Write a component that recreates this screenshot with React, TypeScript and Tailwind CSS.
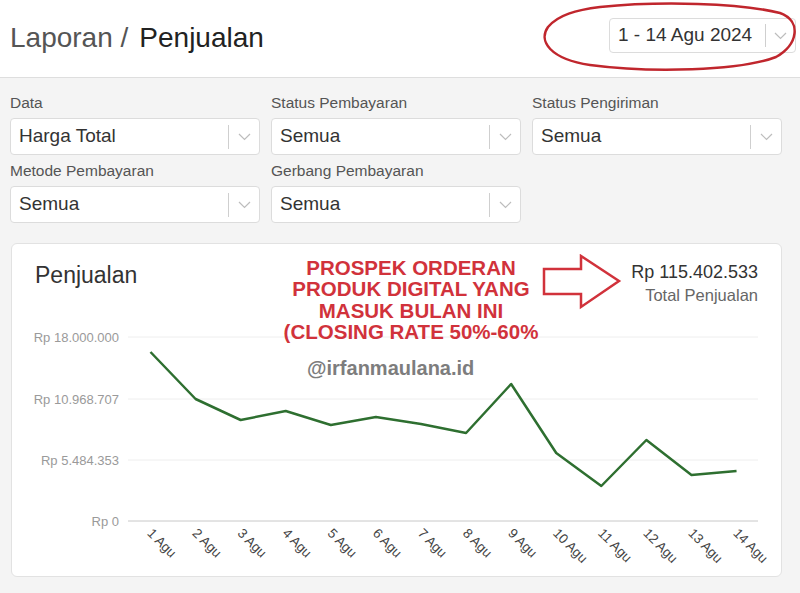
import React from "react";

const font = { fontFamily: '"Liberation Sans", Arial, sans-serif' };

function Chevron() {
  return (
    <svg width="13" height="8" viewBox="0 0 13 8">
      <path d="M1 1 L6.5 6.5 L12 1" fill="none" stroke="#bdbdbd" strokeWidth="1.2" />
    </svg>
  );
}

function SelectBox({ value }: { value: string }) {
  return (
    <div className="flex items-center h-[37px] bg-white border border-[#dcdcdc] rounded-[4px]">
      <div className="flex-1 pl-[8px] text-[19px] text-[#333]">{value}</div>
      <div className="w-px h-[24px] bg-[#cfcfcf]" />
      <div className="w-[30px] flex justify-center">
        <Chevron />
      </div>
    </div>
  );
}

const filters = [
  { label: "Data", value: "Harga Total" },
  { label: "Status Pembayaran", value: "Semua" },
  { label: "Status Pengiriman", value: "Semua" },
  { label: "Metode Pembayaran", value: "Semua" },
  { label: "Gerbang Pembayaran", value: "Semua" },
];

// chart points, svg coords (card-relative, chart top = page y 320)
const points = [31, 78, 99, 90, 104, 96, 103, 112, 63, 132, 165, 119, 154, 150];
const yTicks = [
  { label: "Rp 18.000.000", y: 16 },
  { label: "Rp 10.968.707", y: 78 },
  { label: "Rp 5.484.353", y: 139 },
  { label: "Rp 0", y: 200 },
];

function Chart() {
  const xs = points.map((_, i) => 139.5 + i * 45.08);
  const d = points.map((y, i) => `${i === 0 ? "M" : "L"}${xs[i]} ${y}`).join(" ");
  return (
    <svg width="771" height="256" viewBox="0 0 771 256" className="block">
      {yTicks.map((t) => (
        <g key={t.label}>
          <line
            x1="117"
            x2="747"
            y1={t.y}
            y2={t.y}
            stroke={t.y === 200 ? "#c8c8c8" : "#eeeeee"}
            strokeWidth="1"
          />
          <text
            x="108"
            y={t.y + 4.5}
            textAnchor="end"
            fontSize="13"
            fill="#9a9a9a"
            fontFamily='"Liberation Sans", Arial, sans-serif'
          >
            {t.label}
          </text>
        </g>
      ))}
      <path d={d} fill="none" stroke="#2e6f30" strokeWidth="2.5" strokeLinejoin="round" />
      {xs.map((x, i) => (
        <text
          key={i}
          x={x - 4}
          y={213}
          fontSize="13.5"
          fill="#444"
          fontFamily='"Liberation Sans", Arial, sans-serif'
          transform={`rotate(45 ${x - 4} 213)`}
        >
          {`${i + 1} Agu`}
        </text>
      ))}
    </svg>
  );
}

export default function App() {
  return (
    <div className="w-[800px] h-[593px] bg-[#f4f4f4] overflow-hidden" style={font}>
      <div className="relative h-[78px] bg-white border-b border-[#dedede] flex justify-between items-start pl-[10px] pr-[4px]">
        <h1 className="mt-[21px] text-[28px] leading-[34px] font-normal">
          <span className="text-[#555]">Laporan /</span>
          <span className="ml-[11px] text-[#222]">Penjualan</span>
        </h1>
        <div className="mt-[18px] w-[187px] flex items-center h-[35px] bg-white border border-[#dcdcdc] rounded-[4px]">
          <div className="flex-1 pl-[8px] text-[19px] text-[#333]">1 - 14 Agu 2024</div>
          <div className="w-px h-[23px] bg-[#cfcfcf]" />
          <div className="w-[29px] flex justify-center">
            <Chevron />
          </div>
        </div>
        <svg className="absolute left-[540px] top-[1px]" width="260" height="74" viewBox="0 0 260 74">
          <path
            d="M60 6 C120 0 200 2 240 12 C262 20 258 44 236 56 C200 70 110 72 50 64 C10 58 -2 40 8 26 C18 14 36 9 60 6 Z"
            fill="none"
            stroke="#c0262d"
            strokeWidth="2.5"
          />
        </svg>
      </div>

      <div className="px-[10px] pt-[16px] grid grid-cols-[250px_250px_250px] gap-x-[11px] gap-y-[7px]">
        {filters.map((f) => (
          <div key={f.label}>
            <div className="h-[18px] leading-[18px] text-[15.5px] text-[#555]">{f.label}</div>
            <div className="mt-[6px]">
              <SelectBox value={f.value} />
            </div>
          </div>
        ))}
      </div>

      <div className="relative ml-[11px] mt-[20px] w-[771px] h-[334px] bg-white border border-[#e2e2e2] rounded-[6px]">
        <div className="h-[77px] pt-[17px] px-[23px] flex justify-between items-start">
          <div className="text-[23px] leading-[28px] text-[#333]">Penjualan</div>
          <div className="text-right">
            <div className="text-[18px] leading-[22px] text-[#333]">Rp 115.402.533</div>
            <div className="text-[16.5px] leading-[24px] text-[#666]">Total Penjualan</div>
          </div>
        </div>
        <div className="-ml-px">
          <Chart />
        </div>

        <div className="absolute left-[199px] top-[13px] w-[400px] text-center text-[20.5px] leading-[21.3px] font-bold text-[#d1323b]">
          PROSPEK ORDERAN
          <br />
          PRODUK DIGITAL YANG
          <br />
          MASUK BULAN INI
          <br />
          (CLOSING RATE 50%-60%
        </div>
        <div className="absolute left-[295px] top-[113px] text-[20px] leading-[22px] font-bold text-[#7d7d7d]">
          @irfanmaulana.id
        </div>
        <svg className="absolute left-[530px] top-[10px]" width="82" height="56" viewBox="0 0 82 56">
          <path
            d="M2 15 L39 15 L39 2 L77 27 L39 53 L39 40 L2 40 Z"
            fill="none"
            stroke="#d1323b"
            strokeWidth="2.5"
            strokeLinejoin="miter"
          />
        </svg>
      </div>
    </div>
  );
}
